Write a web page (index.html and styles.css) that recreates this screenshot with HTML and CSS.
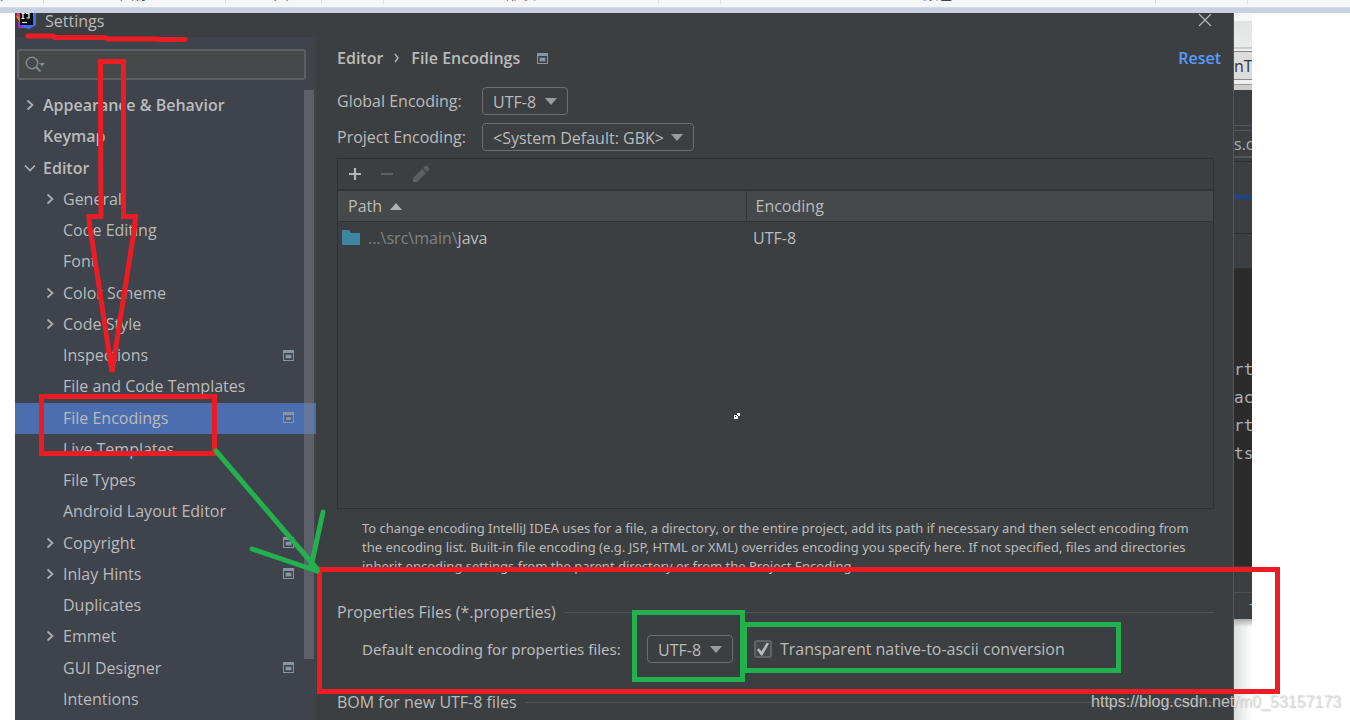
FILE: index.html
```html
<!DOCTYPE html>
<html lang="en">
<head>
<meta charset="utf-8">
<title>Settings</title>
<link rel="stylesheet" href="styles.css">
</head>
<body>
<svg class="defs" width="0" height="0" aria-hidden="true">
  <symbol id="chev" viewBox="0 0 8 12"><path d="M1.5 1.5 6.5 6 1.5 10.500" fill="none" stroke="#adb0b3" stroke-width="1.7"/></symbol>
  <symbol id="chevdown" viewBox="0 0 12 8"><path d="M1 1.500 6 6.500 11 1.500" fill="none" stroke="#adb0b3" stroke-width="1.7"/></symbol>
  <symbol id="proj" viewBox="0 0 11 11"><path d="M0 0h11v11H0zM1 3v7h9V3z" fill="#8896a3" fill-rule="evenodd"/><path d="M2 4h7v5H2z" fill="#55606b"/><path d="M3 5h5v3H3z" fill="#8896a3"/></symbol>
</svg>
<header class="ribbon">
  <span class="group g1">剪贴板</span><span class="group g2">图像</span><span class="group g3">工具</span><span class="group g4"></span><span class="group g5">形状</span><span class="group g6"></span><span class="group g7">颜色</span><span class="group g8"></span>
</header>
<div class="canvas">
  <main class="dialog">
    <div class="titlebar">
      <svg class="logo" width="20" height="20" viewBox="0 0 20 20"><path d="M1 3 9 0 6 12 0 8z" fill="#f0306a"/><path d="M0 7 6 9 4 14z" fill="#f97a12"/><path d="M2 13 10 12 12 19 2 19z" fill="#a32bd3"/><path d="M9 0h7l4 3v13l-7 4-7-2z" fill="#3b70f5"/><path d="M4 2h13v14H4z" fill="#080808"/><path d="M5.500 4.500h3M7 4.500v5M5.500 9.500h3M10 4.500h3v4.500h-2.500" fill="none" stroke="#fff" stroke-width="1.2"/><path d="M6 13.500h5" stroke="#ddd" stroke-width="1.2"/></svg>
      <h1 class="title">Settings</h1>
      <button class="close" aria-label="Close"><svg width="14" height="14" viewBox="0 0 14 14"><path d="M1 1 13 13M13 1 1 13" stroke="#b4b6b8" stroke-width="1.2"/></svg></button>
    </div>
    <div class="content">
      <aside class="sidebar">
        <div class="search">
          <svg width="22" height="18" viewBox="0 0 22 18"><circle cx="7" cy="7" r="5.700" fill="none" stroke="#7f8b91" stroke-width="1.500"/><path d="M11 11l4.500 4.500" stroke="#7f8b91" stroke-width="2"/><path d="M14 7h6l-3 3.500z" fill="#7f8b91"/></svg>
          <input class="search-input" type="text" aria-label="Search settings">
        </div>
        <div class="tree-area">
          <ul class="tree">
            <li class="item top"><svg class="arrow"><use href="#chev"/></svg>Appearance &amp; Behavior</li>
            <li class="item top">Keymap</li>
            <li class="item top"><svg class="arrow down"><use href="#chevdown"/></svg>Editor</li>
            <li class="item"><svg class="arrow"><use href="#chev"/></svg>General</li>
            <li class="item">Code Editing</li>
            <li class="item">Font</li>
            <li class="item"><svg class="arrow"><use href="#chev"/></svg>Color Scheme</li>
            <li class="item"><svg class="arrow"><use href="#chev"/></svg>Code Style</li>
            <li class="item">Inspections<svg class="proj"><use href="#proj"/></svg></li>
            <li class="item">File and Code Templates</li>
            <li class="item selected">File Encodings<svg class="proj"><use href="#proj"/></svg></li>
            <li class="item">Live Templates</li>
            <li class="item">File Types</li>
            <li class="item">Android Layout Editor</li>
            <li class="item"><svg class="arrow"><use href="#chev"/></svg>Copyright<svg class="proj"><use href="#proj"/></svg></li>
            <li class="item"><svg class="arrow"><use href="#chev"/></svg>Inlay Hints<svg class="proj"><use href="#proj"/></svg></li>
            <li class="item">Duplicates</li>
            <li class="item"><svg class="arrow"><use href="#chev"/></svg>Emmet</li>
            <li class="item">GUI Designer<svg class="proj"><use href="#proj"/></svg></li>
            <li class="item">Intentions</li>
          </ul>
          <div class="thumb"></div>
        </div>
      </aside>
      <section class="panel">
        <div class="crumbs">
          <span>Editor</span><svg class="sep" viewBox="0 0 5 10"><path d="M1 1l3 4-3 4" fill="none" stroke="#bbb" stroke-width="1.300"/></svg><span>File Encodings</span><svg class="crumb-icon"><use href="#proj"/></svg>
          <a class="reset" href="#">Reset</a>
        </div>
        <div class="field">
          <label class="field-label" for="global">Global Encoding:</label>
          <span class="combo small"><select id="global"><option>UTF-8</option></select></span>
        </div>
        <div class="field second">
          <label class="field-label" for="project">Project Encoding:</label>
          <span class="combo wide"><select id="project"><option>&lt;System Default: GBK&gt;</option></select></span>
        </div>
        <div class="grid-box">
          <div class="toolbar">
            <button class="tool" aria-label="Add"><svg width="14" height="14" viewBox="0 0 14 14"><path d="M7 1v12M1 7h12" stroke="#b4b6b8" stroke-width="2.200"/></svg></button>
            <button class="tool" aria-label="Remove"><svg width="14" height="14" viewBox="0 0 14 14"><path d="M1 7h12" stroke="#5d6062" stroke-width="2.200"/></svg></button>
            <button class="tool" aria-label="Edit"><svg width="18" height="18" viewBox="0 0 18 18"><path d="M1 17v-4l9-9 4 4-9 9zM11 3l2-2q1-.7 2 0l2 2q.7 1 0 2l-2 2z" fill="#5d6062"/></svg></button>
          </div>
          <table class="paths">
            <thead><tr><th class="col-path">Path<svg class="sort" viewBox="0 0 12 7"><path d="M0 7 6 0l6 7z" fill="#afb1b3"/></svg></th><th>Encoding</th></tr></thead>
            <tbody><tr><td class="path-cell"><svg class="folder" viewBox="0 0 18 15"><path d="M0 0h7l2 3h9v12H0z" fill="#3e86a0"/></svg><span class="dim">...\src\main\</span>java</td><td>UTF-8</td></tr></tbody>
          </table>
        </div>
        <p class="help">To change encoding IntelliJ IDEA uses for a file, a directory, or the entire project, add its path if necessary and then select encoding from the encoding list. Built-in file encoding (e.g. JSP, HTML or XML) overrides encoding you specify here. If not specified, files and directories inherit encoding settings from the parent directory or from the Project Encoding.</p>
        <h2 class="section">Properties Files (*.properties)</h2>
        <div class="props">
          <label class="props-label" for="props">Default encoding for properties files:</label>
          <span class="combo small"><select id="props"><option>UTF-8</option></select></span>
          <input class="check" id="ascii" type="checkbox" checked><label class="check-label" for="ascii">Transparent native-to-ascii conversion</label>
        </div>
        <h2 class="section bom">BOM for new UTF-8 files</h2>
      </section>
    </div>
  </main>
  <aside class="behind">
    <div class="b-chrome"></div>
    <div class="b-tab">nTo</div>
    <div class="b-edge"></div>
    <div class="b-space"></div>
    <div class="b-address">s.co</div>
    <div class="b-line"></div>
    <div class="b-blue"></div>
    <div class="b-row"></div>
    <div class="b-row last"></div>
    <div class="b-code"><span>rt</span><span>ac</span><span>rt</span><span>ts=</span></div>
    <div class="b-status"></div>
    <div class="b-foot">-</div>
    <div class="b-light"></div>
  </aside>
</div>
<svg class="ink" width="1350" height="720" viewBox="0 0 1350 720" aria-hidden="true">
  <g fill="none" stroke="#ed1c24" stroke-width="5" stroke-linecap="round" stroke-linejoin="round">
    <path d="M28 36h25l2 1.500h50l3 1.500h49l3 .5h25"/>
    <path d="M100.500 61.500h23v155h12q-1 14-3 24L112 372 92 240q-3-15-3-23.500h12z" stroke-linejoin="miter"/>
    <path d="M41.500 396.500h173v57h-173zM319.500 569.500h958v122h-958z" stroke-linejoin="miter"/>
  </g>
  <g fill="none" stroke="#22b14c" stroke-width="5" stroke-linecap="round" stroke-linejoin="round">
    <path d="M216 451 317 569M252 549l65 22M323 512l-5 23-7 32 6 4"/>
    <path d="M634.500 612.500h108v67h-108zM744.500 624.500h374v46h-374z" stroke-linejoin="miter"/>
  </g>
  <path d="M734 415h4v4h-4zM737 413h3v3h-3z" fill="#fff"/><path d="M735 416h1v1h-1zM737 415h1v1h-1z" fill="#222"/>
</svg>
<div class="watermark">https://blog.csdn.net/m0_53157173</div>
</body>
</html>
```
FILE: styles.css
```css
* { box-sizing: border-box; }
body { margin: 0; height: 100vh; overflow: hidden; display: flex; flex-direction: column; background: #fff; color: #bbb; font: 16px/20px "Open Sans", "Noto Sans CJK SC", sans-serif; }
h1, h2, p, ul { margin: 0; padding: 0; font-weight: 400; }
button { padding: 0; border: 0; background: none; display: flex; }
select { font: inherit; }

.defs { position: absolute; }

.ribbon { display: flex; flex: none; height: 13px; padding-bottom: 9px; background: linear-gradient(#f5f6f8 7px, #d5dae3 7px, #d5dae3 8px, #c7d1e3 8px); }
.group { display: flex; align-items: flex-end; justify-content: center; height: 4px; padding-bottom: 3px; border-right: 1px solid #dcdfe4; color: #444; font: 15px/17px "Noto Sans CJK SC", sans-serif; overflow: hidden; }
.g1 { width: 44px; justify-content: flex-end; padding-right: 40px; }
.g2 { width: 182px; }
.g3 { width: 96px; }
.g4 { width: 62px; }
.g5 { width: 275px; }
.g6 { width: 62px; }
.g7 { width: 435px; }
.g8 { width: 92px; }

.canvas { display: flex; flex: 1; min-height: 0; padding: 0 98px 0 15px; }
.dialog { display: flex; flex: 1; flex-direction: column; min-width: 0; background: #3c3f41; border-right: 1px solid #55585a; }
.titlebar { display: flex; flex: none; align-items: flex-start; height: 24px; padding: 0 21px 0 1px; overflow: hidden; }
.logo { margin-top: -4px; }
.title { flex: 1; margin-left: 9px; font-size: 16px; line-height: 16px; }

.content { display: flex; flex: 1; min-height: 0; }
.sidebar { display: flex; flex: none; flex-direction: column; width: 301px; background: #3e434c; }
.search { display: flex; align-items: center; flex: none; height: 31px; margin: 12px 10px 10px 2px; padding-left: 6px; border: 2px solid #5c6062; border-radius: 3px; background: #45494a; }
.search-input { flex: 1; min-width: 0; border: 0; outline: 0; background: none; color: #bbb; font: inherit; }
.tree-area { display: grid; flex: 1; min-height: 0; padding-bottom: 5px; grid-template-columns: 1fr 12px; }
.tree { display: grid; grid-area: 1 / 1 / 2 / 3; grid-auto-rows: 1fr; list-style: none; }
.item { display: flex; align-items: center; padding: 0 22px 1px 48px; min-height: 0; }
.item.top { padding-left: 28px; font-weight: 600; }
.arrow { flex: none; width: 8px; height: 12px; margin: 0 9px 0 -17px; }
.arrow.down { width: 12px; height: 8px; margin: 0 7px 0 -19px; }
.proj { flex: none; width: 11px; height: 11px; margin-left: auto; }
.selected { background: #4b6eaf; }
.thumb { grid-area: 1 / 2 / 2 / 3; width: 10px; height: 91%; background: rgba(130, 132, 140, .45); }

.panel { display: flex; flex: 1; flex-direction: column; min-width: 0; padding: 11px 19px 0 21px; }
.crumbs { display: flex; align-items: center; flex: none; margin-bottom: 19px; font-weight: 600; }
.sep { width: 5px; height: 10px; margin: 0 12px 0 11px; }
.crumb-icon { width: 11px; height: 11px; margin-left: 17px; }
.reset { margin-left: auto; margin-right: -7px; color: #589df6; text-decoration: none; }
.field { display: flex; flex: none; align-items: center; height: 28px; }
.second { margin-top: 8px; }
.field-label { width: 145px; }
.combo { position: relative; display: inline-flex; }
.combo select { width: 100%; height: 28px; padding: 1px 0 0 10px; border: 1px solid #6a6d6f; border-radius: 4px; appearance: none; background: #3c3f41; color: #bbb; }
.combo::after { content: ""; position: absolute; top: 11px; right: 11px; border: 6px solid transparent; border-top: 7px solid #9a9da0; border-bottom: 0; pointer-events: none; }
.small { width: 86px; }
.wide { width: 212px; }

.grid-box { flex: none; height: 351px; margin-top: 7px; border: 1px solid #2f3133; }
.toolbar { display: flex; align-items: center; gap: 18px; height: 32px; padding-left: 10px; border-bottom: 2px solid #323435; }
.paths { width: 100%; border-collapse: collapse; table-layout: fixed; }
.paths th { height: 30px; padding: 1px 9px 0; border-bottom: 1px solid #323435; background: #45494a; font-weight: 400; text-align: left; }
.paths .col-path { width: 408px; padding-left: 10px; border-right: 1px solid #323435; }
.paths td { height: 32px; padding: 1px 7px 0; }
.paths .path-cell { padding-left: 4px; }
.sort { width: 12px; height: 7px; margin-left: 8px; vertical-align: 2px; }
.folder { width: 18px; height: 15px; margin-right: 8px; vertical-align: -1px; }
.dim { color: #808284; }

.help { flex: none; margin: 10px 0 0 25px; padding-right: 8px; font: 13px/19px "Noto Sans", sans-serif; }
.section { display: flex; flex: none; align-items: center; gap: 8px; margin-top: 26px; font-size: 16px; }
.section::after { content: ""; flex: 1; height: 1px; background: #515456; }
.props { display: flex; flex: none; align-items: center; height: 28px; margin: 13px 0 0 25px; }
.props-label { min-width: 273px; font: 15px/20px "Noto Sans", sans-serif; white-space: nowrap; }
.props .combo { margin-left: 12px; }
.check { flex: none; width: 18px; height: 18px; margin: 0 8px 0 21px; border: 2px solid #606466; border-radius: 3px; appearance: none; background: #45494a; display: grid; place-items: center; }
.check:checked::after { content: ""; width: 12px; height: 13px; background: #bbb; clip-path: polygon(0 55%, 15% 45%, 38% 68%, 82% 0, 100% 8%, 45% 100%, 33% 100%); }
.bom { margin-top: 29px; }

.behind { display: flex; flex: none; flex-direction: column; width: 18px; overflow: hidden; background: #3c3f41; color: #a9b0b6; }
.behind > div { flex: none; overflow: hidden; white-space: nowrap; }
.b-chrome { height: 39px; background: linear-gradient(#f6f7f7 8px, #e2e4e4 8px, #e9ebeb 34px, #aaa 35px, #eee 36px, #eee 38px, #888 38px); }
.b-tab { display: flex; align-items: center; height: 28px; background: #dcdcdc; border-bottom: 1px solid #888; color: #333; }
.b-edge { height: 10px; background: linear-gradient(#eee 4px, #999 4px, #999 5px, #ccc 5px); }
.b-space { height: 36px; border-bottom: 1px solid #555; }
.b-address { display: flex; align-items: center; height: 28px; margin-top: 4px; border: solid #555; border-width: 1px 0 2px; }
.b-line { height: 34px; margin-top: 3px; border-top: 1px solid #2d2f30; }
.b-blue { height: 4px; background: #214283; }
.b-row { height: 35px; border-bottom: 1px solid #2d2f30; }
.b-code { display: grid; align-content: start; grid-auto-rows: 28px; height: 297px; padding-top: 87px; background: #2b2b2b; font: 16px/28px "DejaVu Sans Mono", monospace; }
.b-status { height: 27px; border-bottom: 1px solid #515151; }
.b-foot { height: 26px; padding-left: 15px; }
.b-light.b-light { flex: 1; background: linear-gradient(#aaa, transparent 8px), linear-gradient(90deg, #dcdedd, #fff); }

.ink { position: absolute; top: 0; left: 0; pointer-events: none; }
.watermark { position: absolute; right: 9px; bottom: 9px; color: rgba(225, 225, 225, .8); font: 16px/18px "Liberation Sans", sans-serif; text-shadow: 1px 1px 1px rgba(100, 100, 100, .3); }
```
